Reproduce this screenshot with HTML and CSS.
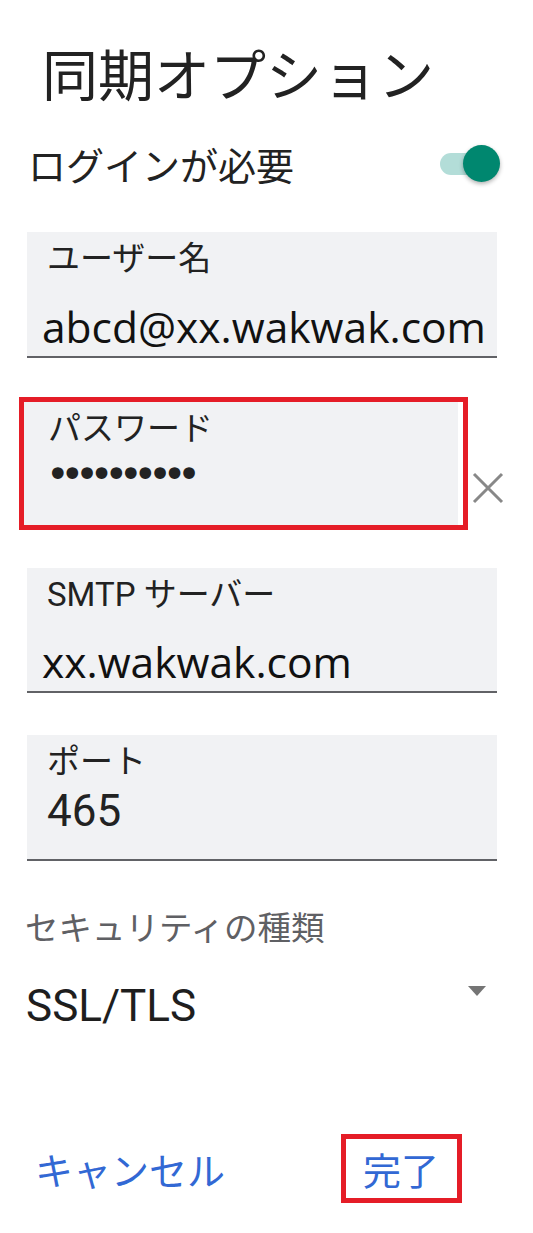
FILE: index.html
```html
<!DOCTYPE html>
<html lang="ja">
<head>
    <meta charset="UTF-8">
    <meta name="viewport" content="width=device-width, initial-scale=1.0">
    <title>同期オプション</title>
    <link rel="stylesheet" href="styles.css">
</head>
<body>

<h1 class="title">同期オプション</h1>

<div class="login-row">
    <span class="login-label">ログインが必要</span>
    <div class="switch">
        <span class="switch-track"></span>
        <span class="switch-thumb"></span>
    </div>
</div>

<div class="field">
    <div class="field-label">ユーザー名</div>
    <div class="field-value">abcd@xx.wakwak.com</div>
</div>

<div class="password-row">
    <div class="highlight">
        <div class="field-password">
            <div class="field-label">パスワード</div>
            <div class="password-dots">••••••••••</div>
        </div>
    </div>
    <svg class="clear-icon" width="32" height="32" viewBox="0 0 32 32">
        <path d="M2 2 L30 30 M30 2 L2 30" stroke="#888" stroke-width="3" fill="none"/>
    </svg>
</div>

<div class="field field-smtp">
    <div class="field-label">SMTP サーバー</div>
    <div class="field-value">xx.wakwak.com</div>
</div>

<div class="field field-port">
    <div class="field-label">ポート</div>
    <div class="port-value">465</div>
</div>

<div class="select-label">セキュリティの種類</div>
<div class="select-row">
    <span class="select-value">SSL/TLS</span>
    <svg class="select-arrow" width="18" height="10" viewBox="0 0 18 10">
        <polygon points="0,0 18,0 9,10" fill="#757575"/>
    </svg>
</div>

<div class="buttons">
    <span class="btn btn-cancel">キャンセル</span>
    <span class="btn btn-done">完了</span>
</div>

</body>
</html>
```

FILE: styles.css
```css
body {
    margin: 0;
    padding: 0;
    width: 533px;
    background-color: #fff;
    color: #212121;
    font-family: Roboto, "Noto Sans CJK JP", sans-serif;
}

.title {
    margin: 0;
    padding: 44px 0 0 42px;
    font-family: "Noto Sans CJK JP", sans-serif;
    font-size: 56px;
    font-weight: normal;
    line-height: 55px;
    color: #222;
}

.login-row {
    display: flex;
    justify-content: space-between;
    align-items: center;
    height: 38px;
    margin-top: 46px;
    padding: 0 33px 0 28px;
}

.login-label {
    font-family: "Noto Sans CJK JP", sans-serif;
    font-size: 38px;
    line-height: 38px;
    color: #222;
}

.switch {
    position: relative;
    width: 60px;
    height: 38px;
}

.switch-track {
    position: absolute;
    left: 0;
    top: 8px;
    width: 52px;
    height: 22px;
    border-radius: 11px;
    background-color: #b3ddd8;
}

.switch-thumb {
    position: absolute;
    right: 0;
    top: 0;
    width: 37px;
    height: 37px;
    border-radius: 50%;
    background-color: #00876f;
    box-shadow: 0 2px 4px rgba(0, 0, 0, 0.3);
}

.field {
    margin: 49px 36px 0 27px;
    padding-bottom: 8px;
    background-color: #f1f2f4;
    border-bottom: 2px solid #616266;
}

.field-label {
    padding: 10px 0 0 20px;
    font-size: 33px;
    line-height: 33px;
    color: #222;
}

.field-value {
    margin-top: 31px;
    padding-left: 15px;
    font-family: "Open Sans", sans-serif;
    font-size: 42.5px;
    line-height: 42px;
    color: #111;
}

.password-row {
    display: flex;
    align-items: flex-end;
    margin-top: 39px;
    padding-left: 19px;
}

.highlight {
    border: 5px solid #e51d27;
    padding-right: 5px;
}

.field-password {
    width: 434px;
    height: 123px;
    background-color: #f1f2f4;
}

.field-password .field-label {
    padding-left: 24px;
}

.password-dots {
    margin-top: 9px;
    padding-left: 22px;
    font-family: "DejaVu Sans", sans-serif;
    font-size: 40px;
    line-height: 40px;
    letter-spacing: -9px;
    color: #222;
}

.clear-icon {
    margin: 0 0 26px 4px;
}

.field-smtp {
    margin-top: 38px;
}

.field-smtp .field-value {
    margin-top: 30px;
}

.field-port {
    margin-top: 42px;
    padding-bottom: 26px;
}

.port-value {
    margin-top: 11px;
    padding-left: 20px;
    font-size: 44px;
    line-height: 44px;
    color: #222;
}

.select-label {
    margin-top: 48px;
    padding-left: 25px;
    font-family: "Noto Sans CJK JP", sans-serif;
    font-size: 33.5px;
    line-height: 33px;
    color: #5f6064;
}

.select-row {
    display: flex;
    justify-content: space-between;
    align-items: flex-start;
    margin-top: 42px;
    padding: 0 47px 0 26px;
}

.select-value {
    font-size: 44px;
    line-height: 44px;
    color: #1e1e1e;
}

.select-arrow {
    margin-top: 2px;
}

.buttons {
    display: flex;
    align-items: center;
    margin-top: 106px;
    padding: 0 71px 0 35px;
}

.btn {
    font-family: "Noto Sans CJK JP", sans-serif;
    font-size: 38px;
    line-height: 38px;
    color: #3268d4;
}

.btn-done {
    margin-left: auto;
    padding: 11px 18px 10px 17px;
    border: 5px solid #e51d27;
}
```
